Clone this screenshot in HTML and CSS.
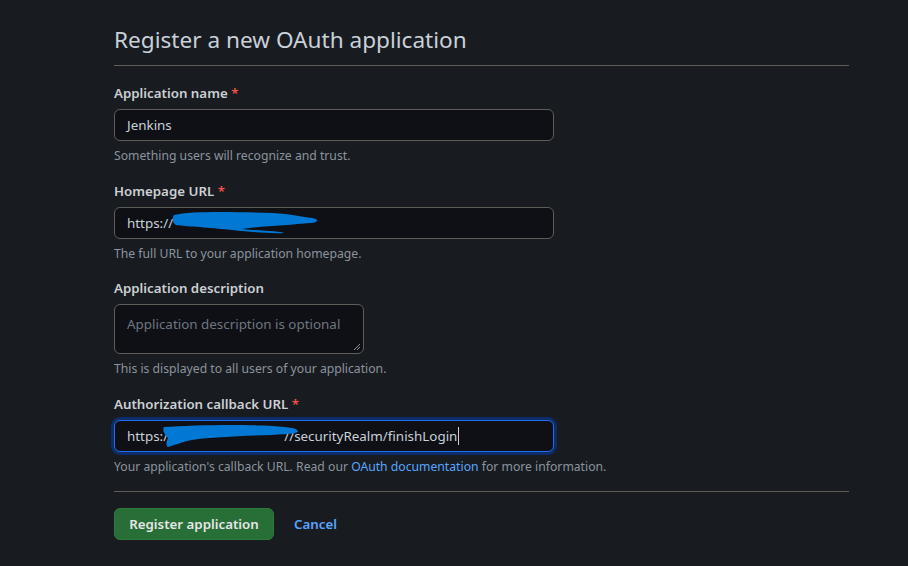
FILE: index.html
```html
<!DOCTYPE html>
<html>
<head>
<meta charset="utf-8">
<link rel="stylesheet" href="styles.css">
</head>
<body>
<div class="page">
  <h1 class="title">Register a new OAuth application</h1>
  <form class="form">
    <div class="group">
      <label class="label">Application name <span class="req">*</span></label>
      <div class="input wide"><span class="val">Jenkins</span></div>
      <p class="note">Something users will recognize and trust.</p>
    </div>
    <div class="group tight">
      <label class="label">Homepage URL <span class="req">*</span></label>
      <div class="input wide"><span class="val">https://</span>
        <svg class="scribble s1" width="150" height="26" viewBox="0 0 150 26"><path d="M2 6 C20 2 60 3 100 4 C120 5 130 8 140 9 C148 10 146 14 138 14 C120 16 90 17 70 20 C90 22 110 22 112 24 C96 25 70 22 50 20 C30 18 10 17 4 16 C0 14 0 8 2 6 Z" fill="#0078d4"/></svg>
      </div>
      <p class="note">The full URL to your application homepage.</p>
    </div>
    <div class="group">
      <label class="label">Application description</label>
      <div class="textarea"><span class="ph">Application description is optional</span>
        <svg class="grip" width="8" height="8" viewBox="0 0 8 8"><path d="M7 1L1 7M7 4L4 7" stroke="#8b949e" stroke-width="1"/></svg>
      </div>
      <p class="note">This is displayed to all users of your application.</p>
    </div>
    <div class="group">
      <label class="label">Authorization callback URL <span class="req">*</span></label>
      <div class="input wide focus"><span class="val">https:/<span class="gap"></span>//securityRealm/finishLogin<span class="caret"></span></span>
        <svg class="scribble s2" width="140" height="26" viewBox="0 0 140 26"><path d="M2 5 C30 3 80 2 110 4 C125 5 135 6 136 9 C137 12 126 12 110 13 C80 14 50 15 30 18 C20 20 10 24 6 25 C4 24 4 20 6 16 C2 12 0 8 2 5 Z" fill="#0078d4"/></svg>
      </div>
      <p class="note">Your application's callback URL. Read our <a class="link" href="#">OAuth documentation</a> for more information.</p>
    </div>
    <div class="actions">
      <button class="btn" type="button">Register application</button>
      <a class="cancel" href="#">Cancel</a>
    </div>
  </form>
</div>
</body>
</html>
```
FILE: styles.css
```css
html, body {
  margin: 0;
  padding: 0;
  background: #181b20;
}
body {
  font-family: "Noto Sans", "Open Sans", sans-serif;
  color: #c9d1d9;
  height: 566px;
  overflow: hidden;
}
.page {
  width: 735px;
  margin-left: 114px;
  padding-top: 23px;
}
.title {
  margin: 0;
  font-weight: 400;
  font-size: 22.6px;
  line-height: 34px;
  color: #c9d1d9;
  padding-bottom: 8px;
  border-bottom: 1px solid #5f5d5a;
}
.form {
  padding-top: 17px;
}
.group {
  margin-bottom: 16px;
}
.tight {
  margin-bottom: 15px;
}
.label {
  display: block;
  font-size: 13.3px;
  font-weight: 600;
  line-height: 20px;
  color: #ccd0d4;
  margin-bottom: 6px;
}
.req {
  color: #f85149;
}
.input {
  position: relative;
  box-sizing: border-box;
  height: 32px;
  border: 1px solid #5f5d5a;
  border-radius: 6px;
  background: #0e1015;
  font-size: 13.4px;
  line-height: 20px;
  padding: 5px 12px;
  display: flex;
  align-items: center;
}
.wide {
  width: 440px;
}
.val {
  color: #c9d1d9;
  display: flex;
  align-items: center;
  white-space: pre;
}
.gap {
  display: inline-block;
  width: 116px;
}
.caret {
  display: inline-block;
  width: 1px;
  height: 18px;
  background: #c9d1d9;
  margin-left: 1px;
}
.focus {
  border-color: #1f6feb;
  box-shadow: 0 0 0 3px #0c2d6b;
}
.scribble {
  position: absolute;
}
.s1 {
  left: 57px;
  top: 1px;
}
.s2 {
  left: 47px;
  top: 1px;
}
.textarea {
  position: relative;
  box-sizing: border-box;
  width: 250px;
  height: 50px;
  border: 1px solid #5f5d5a;
  border-radius: 6px;
  background: #0e1015;
  padding: 9px 12px;
  font-size: 13.4px;
  line-height: 20px;
}
.ph {
  color: #6e7681;
}
.grip {
  position: absolute;
  right: 2px;
  bottom: 2px;
}
.note {
  margin: 6px 0 0;
  font-size: 12.2px;
  line-height: 18px;
  color: #8b949e;
}
.link {
  color: #58a6ff;
  text-decoration: none;
}
.actions {
  border-top: 1px solid #5f5d5a;
  padding-top: 16px;
  margin-top: -1px;
  display: flex;
  align-items: center;
  gap: 20px;
}
.btn {
  font-family: inherit;
  font-size: 13.3px;
  font-weight: 600;
  color: #e6e6e6;
  background: #276e37;
  border: 1px solid #2c7a3d;
  border-radius: 6px;
  height: 32px;
  width: 160px;
  padding: 0;
  white-space: nowrap;
}
.cancel {
  color: #58a6ff;
  font-size: 13.3px;
  font-weight: 600;
  text-decoration: none;
}
```
